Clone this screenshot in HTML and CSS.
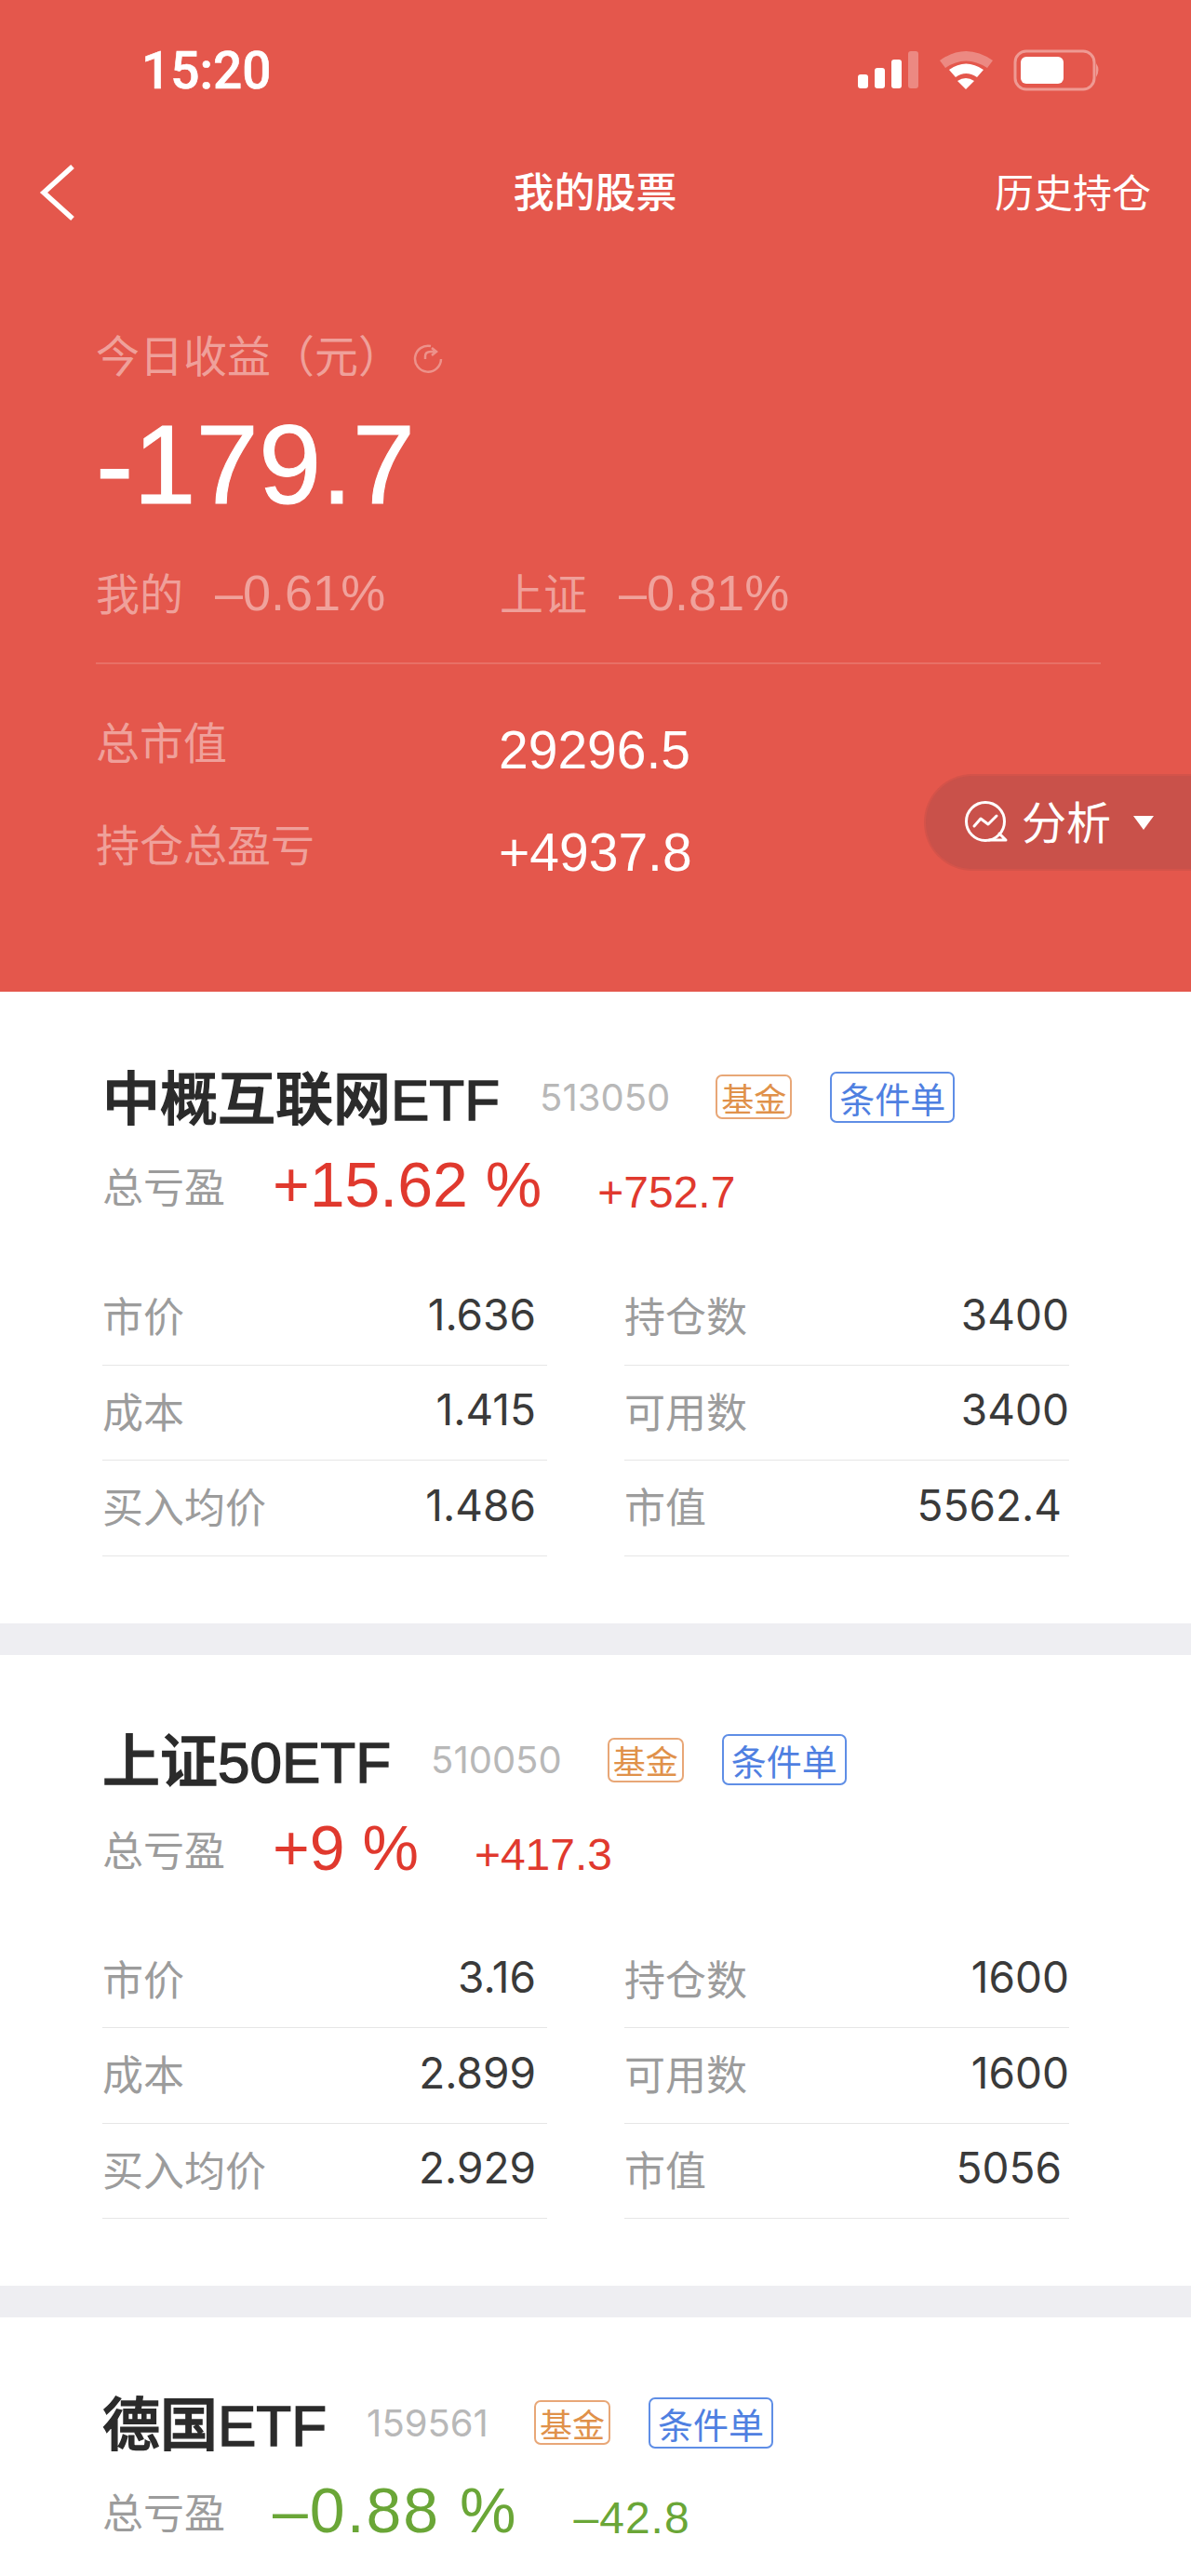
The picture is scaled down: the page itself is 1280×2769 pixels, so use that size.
FILE: index.html
```html
<!DOCTYPE html>
<html>
	<head>
		<meta charset="UTF-8">
		<title>我的股票</title>
		<link rel="stylesheet" href="styles.css">
	</head>
	<body>
		<div id="top">
			<div class="status">
				<span class="time">15:20</span>
				<svg class="status-icons" width="262" height="46" viewBox="0 0 262 46">
					<rect x="0" y="27" width="11" height="15" rx="3" fill="#fff"/>
					<rect x="18" y="20" width="11" height="22" rx="3" fill="#fff"/>
					<rect x="36" y="11" width="11" height="31" rx="3" fill="#fff"/>
					<rect x="54" y="2" width="11" height="40" rx="3" fill="#fff" opacity="0.3"/>
					<path d="M88 12 Q116 -8 145 12 L139 20 Q116 5 94 20 Z" fill="#fff" opacity="0.3"/>
					<path d="M98 22 Q116 9 135 22 L128 30 Q116 22 105 30 Z" fill="#fff"/>
					<path d="M107 34 Q116 28 125 34 L116 43 Z" fill="#fff"/>
					<rect x="169" y="2" width="85" height="41" rx="12" fill="none" stroke="#fff" stroke-opacity="0.4" stroke-width="3"/>
					<rect x="175" y="8" width="46" height="29" rx="6" fill="#fff"/>
					<path d="M256 15 Q261 22 256 30 Z" fill="#fff" opacity="0.4"/>
				</svg>
			</div>
			<div class="nav">
				<svg class="back" width="40" height="62" viewBox="0 0 40 62"><path d="M36 3 L5 31 L36 59" fill="none" stroke="#fff" stroke-width="5.5"/></svg>
				<span class="nav-title">我的股票</span>
				<span class="nav-right">历史持仓</span>
			</div>
			<div class="today"><span>今日收益（元）</span>
				<svg class="refresh" width="32" height="32" viewBox="0 0 32 32"><path d="M19 3 A14 14 0 1 0 30 17" fill="none" stroke="#fff" stroke-width="2.5"/><path d="M13 17 V14 Q13 9 19 9 H24 M20 5 L25 9 L20 13" fill="none" stroke="#fff" stroke-width="2.5"/></svg>
			</div>
			<div class="big">-179.7</div>
			<div class="compare">
				<div class="compare-item"><span class="c-name">我的</span><span class="c-num">–0.61%</span></div>
				<div class="compare-item"><span class="c-name">上证</span><span class="c-num">–0.81%</span></div>
			</div>
			<div class="divider"></div>
			<div class="sum-row"><span class="sum-name">总市值</span><span class="sum-val">29296.5</span></div>
			<div class="sum-row"><span class="sum-name">持仓总盈亏</span><span class="sum-val">+4937.8</span></div>
			<div class="pill">
				<svg width="50" height="50" viewBox="0 0 50 50"><circle cx="24" cy="24" r="20.5" fill="none" stroke="#fff" stroke-width="3"/><path d="M28 44 H46 L39 37" fill="none" stroke="#fff" stroke-width="3" stroke-linejoin="round" stroke-linecap="round"/><path d="M12 29 L19 21 L27 27 L36 18" fill="none" stroke="#fff" stroke-width="3" stroke-linecap="round" stroke-linejoin="round"/></svg>
				<span>分析</span>
				<i class="arrow"></i>
			</div>
		</div>

		<div class="card">
			<div class="title-row">
				<span class="name">中概互联网ETF</span>
				<span class="code">513050</span>
				<span class="tag fund">基金</span>
				<span class="tag cond">条件单</span>
			</div>
			<div class="gain-row">
				<span class="gain-name">总亏盈</span>
				<span class="pct up">+15.62 %</span>
				<span class="amt up">+752.7</span>
			</div>
			<div class="table">
				<div class="cell"><span>市价</span><b>1.636</b></div>
				<div class="cell"><span>持仓数</span><b>3400</b></div>
				<div class="cell"><span>成本</span><b>1.415</b></div>
				<div class="cell"><span>可用数</span><b>3400</b></div>
				<div class="cell"><span>买入均价</span><b>1.486</b></div>
				<div class="cell last"><span>市值</span><b>5562.4</b></div>
			</div>
		</div>

		<div class="card">
			<div class="title-row">
				<span class="name">上证50ETF</span>
				<span class="code">510050</span>
				<span class="tag fund">基金</span>
				<span class="tag cond">条件单</span>
			</div>
			<div class="gain-row">
				<span class="gain-name">总亏盈</span>
				<span class="pct up">+9 %</span>
				<span class="amt up">+417.3</span>
			</div>
			<div class="table">
				<div class="cell"><span>市价</span><b>3.16</b></div>
				<div class="cell"><span>持仓数</span><b>1600</b></div>
				<div class="cell"><span>成本</span><b>2.899</b></div>
				<div class="cell"><span>可用数</span><b>1600</b></div>
				<div class="cell"><span>买入均价</span><b>2.929</b></div>
				<div class="cell last"><span>市值</span><b>5056</b></div>
			</div>
		</div>

		<div class="card">
			<div class="title-row">
				<span class="name">德国ETF</span>
				<span class="code">159561</span>
				<span class="tag fund">基金</span>
				<span class="tag cond">条件单</span>
			</div>
			<div class="gain-row">
				<span class="gain-name">总亏盈</span>
				<span class="pct down">–0.88 %</span>
				<span class="amt down">–42.8</span>
			</div>
		</div>
	</body>
</html>
```

FILE: styles.css
```css
*{margin: 0;padding: 0;box-sizing: border-box;}
html,body{
	height: 2769px;
	overflow: hidden;
}
body{
	width: 1280px;
	background: #eeeef2;
	font-family: "Liberation Sans", "Noto Sans CJK SC", sans-serif;
}
#top{
	position: relative;
	height: 1066px;
	padding: 0 97px 0 103px;
	background: #e4574c;
	color: #fff;
}
.status{
	height: 152px;
	margin: 0 -97px 0 -103px;
	padding: 0 96px 0 152px;
	display: flex;
	align-items: center;
	justify-content: space-between;
}
.time{
	font-family: Roboto, sans-serif;
	font-size: 55px;
	font-weight: 500;
	-webkit-text-stroke: 0.6px #fff;
}
.nav{
	height: 110px;
	margin: 0 -97px 0 -103px;
	padding: 0 43px 0 42px;
	display: grid;
	grid-template-columns: 1fr auto 1fr;
	align-items: center;
}
.back{
	display: block;
}
.nav-title{
	margin-bottom: 6px;
	font-size: 44px;
	font-weight: 500;
}
.nav-right{
	margin-bottom: 6px;
	font-size: 42px;
	text-align: right;
}
.today{
	display: flex;
	align-items: center;
	height: 60px;
	margin-top: 90px;
	font-size: 47px;
	color: rgba(255,255,255,0.45);
}
.today span{
	margin-bottom: 6px;
}
.refresh{
	margin: 6px 0 0 12px;
	opacity: 0.35;
}
.big{
	height: 130px;
	margin-top: 22px;
	font-size: 121px;
	line-height: 130px;
	-webkit-text-stroke: 1px #fff;
}
.compare{
	display: flex;
	height: 60px;
	margin-top: 43px;
	font-size: 47px;
	line-height: 60px;
	color: rgba(255,255,255,0.45);
}
.compare-item{
	width: 434px;
}
.c-num{
	margin-left: 34px;
	font-size: 54px;
}
.divider{
	height: 2px;
	margin-top: 45px;
	background: rgba(255,255,255,0.15);
}
.sum-row{
	display: flex;
	align-items: center;
	height: 110px;
}
.divider + .sum-row{
	margin-top: 36px;
}
.sum-name{
	width: 433px;
	padding-bottom: 19px;
	font-size: 47px;
	color: rgba(255,255,255,0.45);
}
.sum-val{
	padding-top: 2px;
	font-size: 57px;
}
.pill{
	position: absolute;
	top: 832px;
	right: 0;
	width: 287px;
	height: 104px;
	padding-left: 40px;
	display: flex;
	align-items: center;
	background: #c9514a;
	border: 2px solid #d4534a;
	border-right: 0;
	border-radius: 52px 0 0 52px;
	font-size: 48px;
}
.pill span{
	margin: 0 0 6px 13px;
}
.arrow{
	width: 0;
	height: 0;
	margin-left: 24px;
	border-left: 11px solid transparent;
	border-right: 11px solid transparent;
	border-top: 15px solid #fff;
}
.card{
	margin-bottom: 34px;
	padding: 73px 131px 72px 110px;
	background: #fff;
}
.card:last-child{
	margin-bottom: 0;
	height: 279px;
}
.title-row{
	display: flex;
	align-items: center;
	height: 80px;
}
.name{
	padding-bottom: 5px;
	font-size: 62px;
	font-weight: 500;
	color: #2b2b2b;
	-webkit-text-stroke: 1.4px #2b2b2b;
}
.code{
	margin-left: 43px;
	font-family: Inter, sans-serif;
	font-size: 40px;
	color: #b8b8b8;
}
.tag{
	display: flex;
	align-items: center;
	justify-content: center;
	border-style: solid;
	border-width: 2px;
	border-radius: 7px;
}
.fund{
	width: 82px;
	height: 48px;
	margin-left: 49px;
	font-size: 35px;
	color: #e0914a;
	border-color: #e8a777;
}
.cond{
	width: 134px;
	height: 55px;
	margin-left: 41px;
	font-size: 38px;
	color: #4f80e1;
	border-color: #5f8ee6;
}
.gain-row{
	display: flex;
	align-items: center;
	height: 70px;
	margin-top: 21px;
}
.gain-name{
	width: 183px;
	padding-bottom: 2px;
	font-size: 44px;
	color: #9c9c9c;
}
.pct{
	margin-right: 60px;
	padding-bottom: 4px;
	font-size: 68px;
}
.amt{
	padding-top: 12px;
	font-size: 48px;
}
.up{
	color: #e0392e;
}
.down{
	color: #6aa637;
}
.pct.down{
	letter-spacing: 2px;
}
.amt.down{
	letter-spacing: 1px;
}
.table{
	display: grid;
	grid-template-columns: 478px 478px;
	column-gap: 83px;
	margin-top: 55px;
}
.cell{
	display: flex;
	align-items: center;
	justify-content: space-between;
	height: 102.5px;
	padding-right: 12px;
	border-bottom: 1px solid #e6e6e6;
	font-size: 44px;
	color: #9c9c9c;
}
.cell:nth-child(even){
	padding-right: 0;
}
.cell span{
	margin-bottom: 5px;
}
.cell b{
	margin-bottom: 6px;
	font-family: Inter, sans-serif;
	font-size: 46px;
	font-weight: normal;
	color: #3a3a3a;
}
.cell.last{
	padding-right: 8px;
}
```
